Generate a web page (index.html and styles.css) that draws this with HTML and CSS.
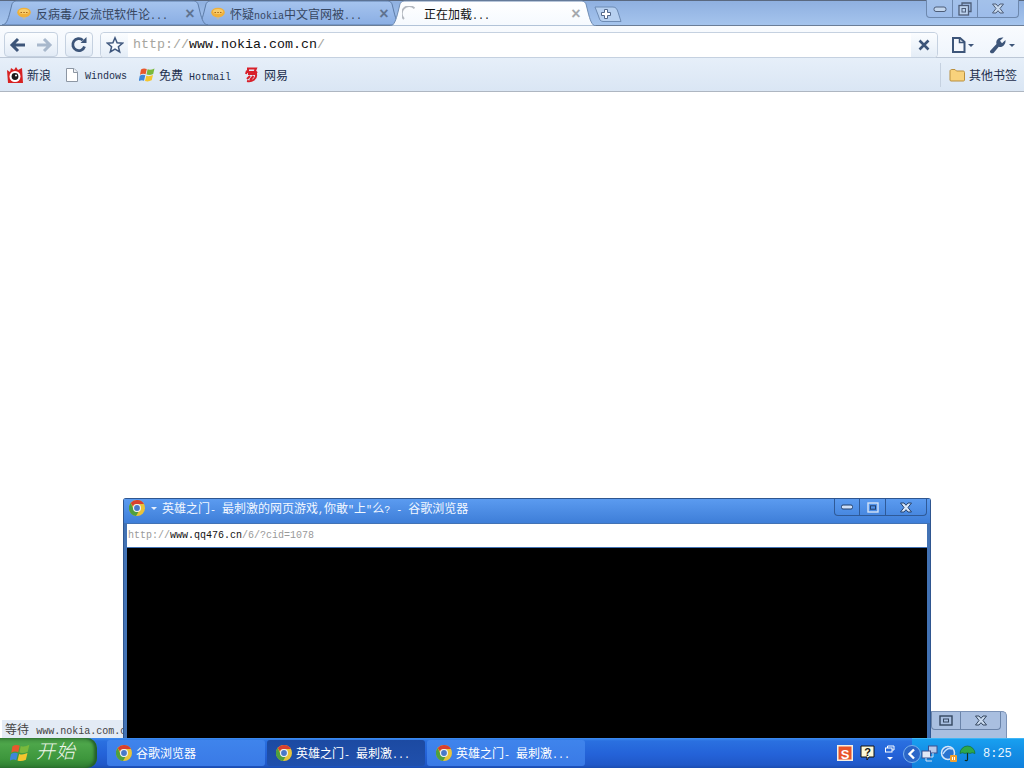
FILE: index.html
```html
<!DOCTYPE html>
<html lang="zh-CN">
<head>
<meta charset="utf-8">
<title>正在加载...</title>
<link rel="stylesheet" href="styles.css">
</head>
<body>
<svg class="defs" width="0" height="0">
  <defs>
    <linearGradient id="backfill" x1="0" y1="0" x2="0" y2="1">
      <stop offset="0" stop-color="#a6c4ee"/>
      <stop offset="1" stop-color="#8aaee4"/>
    </linearGradient>
    <linearGradient id="frontfill" x1="0" y1="0" x2="0" y2="1">
      <stop offset="0" stop-color="#ffffff"/>
      <stop offset="1" stop-color="#f5f9fe"/>
    </linearGradient>
  </defs>
  <symbol id="chrome" viewBox="0 0 16 16">
    <circle cx="8" cy="8" r="8" fill="#e8c33a"/>
    <path d="M8 0a8 8 0 0 1 7 4H8a4 4 0 0 0-4 2.4L1.700 3A8 8 0 0 1 8 0z" fill="#d8402f"/>
    <path d="M1.700 3 4.600 9.500A4 4 0 0 0 9.500 11.700L7 16A8 8 0 0 1 1.700 3z" fill="#4f9f3f"/>
    <circle cx="8" cy="8" r="4" fill="#eef2f8"/>
    <circle cx="8" cy="8" r="2.900" fill="#4a78c8"/>
  </symbol>
  <symbol id="bubble" viewBox="0 0 14 14">
    <path d="M1 5.500 7 13l6-7.500z" fill="#b9b9ae"/>
    <ellipse cx="7" cy="5.500" rx="6.800" ry="4.800" fill="#f0b03a"/>
    <ellipse cx="7" cy="4.500" rx="5" ry="2.500" fill="#f7cd6c"/>
    <path d="M3.500 5.500h1.500M6.300 5.500h1.500M9 5.500h1.500" stroke="#a5661a" stroke-width="1.200"/>
  </symbol>
  <symbol id="flag" viewBox="0 0 16 16">
    <path d="M2 2.500Q4.500.8 7.800 2L6.600 7.300Q3.800 6.200 1 7.800z" fill="#e8582c"/>
    <path d="M8.600 2.300Q11.500 3.600 15.500 1.400L14.200 6.900Q10.800 8.700 7.500 7.500z" fill="#7ab93c"/>
    <path d="M.8 8.800Q3.500 7.200 6.300 8.300L5 13.700Q2.600 12.600-.4 14.200z" fill="#3f86d8"/>
    <path d="M7.300 8.700Q10 9.900 14 8L12.700 13.300Q9 15.200 6 14z" fill="#f4c52e"/>
  </symbol>
</svg>

<main class="browser">
  <div class="tabstrip">
    <div class="tab tab-first">
      <svg class="tab-shape" viewBox="0 0 206 25" preserveAspectRatio="none"><path class="shape-back" d="M0 25C4 25 6 20 8 12L10 4C11 2 12 1 16 1L190 1C194 1 195 2 196 4L198 12C200 20 202 25 206 25Z"/></svg>
      <svg class="tab-icon" width="14" height="14"><use href="#bubble"/></svg>
      <span class="tab-title">反病毒<span class="lat">/</span>反流氓软件论<span class="lat">...</span></span>
      <span class="tab-close">×</span>
    </div>
    <div class="tab">
      <svg class="tab-shape" viewBox="0 0 206 25" preserveAspectRatio="none"><path class="shape-back" d="M0 25C4 25 6 20 8 12L10 4C11 2 12 1 16 1L190 1C194 1 195 2 196 4L198 12C200 20 202 25 206 25Z"/></svg>
      <svg class="tab-icon" width="14" height="14"><use href="#bubble"/></svg>
      <span class="tab-title">怀疑<span class="lat">nokia</span>中文官网被<span class="lat">...</span></span>
      <span class="tab-close">×</span>
    </div>
    <div class="tab tab-active">
      <svg class="tab-shape" viewBox="0 0 206 26" preserveAspectRatio="none"><path class="shape-front" d="M0 26C4 26 6 20 8 12L10 4C11 2 12 1 16 1L190 1C194 1 195 2 196 4L198 12C200 20 202 26 206 26Z"/></svg>
      <svg class="tab-icon" width="16" height="16" viewBox="0 0 16 16"><path d="M2 13A7 7 0 0 1 12.500 2.300" fill="none" stroke="#b4b9c0" stroke-width="1.800"/></svg>
      <span class="tab-title">正在加载<span class="lat">...</span></span>
      <span class="tab-close">×</span>
    </div>
    <svg class="newtab" width="30" height="18" viewBox="0 0 30 18">
      <path d="M1 1H19C22 1 23 3 24 6L27 15.500H9C6 15.500 5.500 13 4.500 10Z" fill="#b7d0f0" stroke="#6d8bb4"/>
      <path d="M11 4.500h3v3h3v3h-3v3h-3v-3H8v-3h3z" transform="translate(-.5 -1)" fill="#fff" stroke="#53688a"/>
    </svg>
    <div class="winbtns">
      <span class="winbtn winbtn-min"><svg width="14" height="8" viewBox="0 0 14 8"><rect x="1" y="2" width="12" height="4.500" rx="2" fill="#c3d6ee" stroke="#4d5d78"/></svg></span>
      <span class="winbtn winbtn-max"><svg width="14" height="14" viewBox="0 0 14 14"><path d="M4 3.500V1H13V9.500H10.500" fill="none" stroke="#4d5d78" stroke-width="1.300"/><rect x="1" y="3.500" width="9.500" height="9.500" fill="#bcd2ee" stroke="#4d5d78" stroke-width="1.300"/><rect x="4" y="6.500" width="3.500" height="3.500" fill="none" stroke="#4d5d78"/></svg></span>
      <span class="winbtn winbtn-close"><svg width="14" height="11" viewBox="0 0 14 11"><path d="M1.500 1H5L7 3.300 9 1H12.500L9 5.500 12.500 10H9L7 7.700 5 10H1.500L5 5.500Z" fill="#c9daef" stroke="#4d5d78"/></svg></span>
    </div>
  </div>

  <div class="toolbar">
    <div class="navgroup">
      <span class="navbtn"><svg width="18" height="16" viewBox="0 0 18 16"><path d="M9 2 3 8l6 6M3 8h13" fill="none" stroke="#3d5579" stroke-width="3"/></svg></span>
      <span class="navbtn"><svg width="18" height="16" viewBox="0 0 18 16"><path d="M9 2l6 6-6 6M15 8H2" fill="none" stroke="#a8b8cc" stroke-width="3"/></svg></span>
    </div>
    <div class="navgroup navgroup-reload">
      <span class="navbtn"><svg width="18" height="18" viewBox="0 0 18 18"><path d="M14.500 10.500A6 6 0 1 1 12.800 4.200" fill="none" stroke="#3d5579" stroke-width="2.800"/><path d="M10.500 7H16.500V1Z" fill="#3d5579"/></svg></span>
    </div>
    <div class="omnibox">
      <span class="omni-star"><svg width="18" height="18" viewBox="0 0 18 18"><path d="M9 1.800 11.100 6.800 16.500 7.200 12.400 10.700 13.700 16 9 13.200 4.300 16 5.600 10.700 1.500 7.200 6.900 6.800Z" fill="#f7fafe" stroke="#40587e" stroke-width="1.500"/></svg></span>
      <div class="omni-url"><span class="url-scheme">http://</span>www.nokia.com.cn<span class="url-scheme">/</span></div>
      <span class="omni-stop"><svg width="12" height="12" viewBox="0 0 12 12"><path d="M1.500 1.500l9 9M10.500 1.500l-9 9" stroke="#3d5579" stroke-width="2.600"/></svg></span>
    </div>
    <div class="toolmenu">
      <svg width="24" height="18" viewBox="0 0 24 18"><path d="M2 2H9L13.500 6V16H2Z" fill="#f5f8fd" stroke="#3d5579" stroke-width="2"/><path d="M8.500 2V6.500H13.500" fill="none" stroke="#3d5579" stroke-width="1.500"/><path d="M17 8h6l-3 3z" fill="#3d5579"/></svg>
    </div>
    <div class="toolmenu toolmenu-wrench">
      <svg width="27" height="18" viewBox="0 0 27 18"><path d="M1 15 7.500 8C6.500 4 9.500 1 14.500 1.500L11 4.800 13 7.300 16.500 4C17 9 13 11.800 9.800 10.800L4.500 17C3 18 .5 16.800 1 15Z" fill="#3d5579"/><path d="M20 8h6l-3 3z" fill="#3d5579"/></svg>
    </div>
  </div>

  <div class="bookmarks">
    <span class="bookmark"><svg width="16" height="16" viewBox="0 0 16 16"><path d="M0 3 3 5 4 1 7 3 9 0 11 3 15 1 16 16H1Z" fill="#d72222"/><circle cx="8" cy="9.500" r="5.500" fill="#fff"/><circle cx="8" cy="9.500" r="3.400" fill="#1a1a1a"/><circle cx="9" cy="8.500" r="1" fill="#fff"/></svg>新浪</span>
    <span class="bookmark bookmark-latin bm-windows"><svg width="14" height="16" viewBox="0 0 14 16"><path d="M1.500 1.500H9L12.500 5V14.500H1.500Z" fill="#fff" stroke="#8c96a3"/><path d="M8.500 1.500V5.500H12.500" fill="#eef1f5" stroke="#8c96a3"/></svg><span class="bm-lat">Windows</span></span>
    <span class="bookmark bookmark-latin bm-hotmail"><svg width="16" height="16"><use href="#flag"/></svg><span><span class="cjk-size">免费</span> Hotmail</span></span>
    <span class="bookmark bm-netease"><svg width="14" height="16" viewBox="0 0 14 16"><path d="M3 1.500H11L9.500 5H3ZM3 7H12M2 3.500 1 7M11 7C12 12 7 15 2 14M5 9 2 12M8.500 9 5 13M10 4 12 6" fill="none" stroke="#d8202a" stroke-width="2"/></svg>网易</span>
    <span class="bookmark bm-other"><svg width="16" height="14" viewBox="0 0 16 14"><path d="M1 3C1 2 2 1.500 3 1.500H6L7.500 3H14C15 3 15.500 3.500 15.500 4.500V12C15.500 12.800 15 13 14 13H2C1.300 13 1 12.500 1 12Z" fill="#f8d27c" stroke="#b98f3f"/></svg>其他书签</span>
  </div>
  <div class="page"></div>
</main>

<div class="statusbubble">等待 <span class="status-url">www.nokia.com.cn</span></div>

<section class="backwin">
  <div class="backwin-btns">
    <span class="backbtn backbtn-max"><svg width="14" height="11" viewBox="0 0 14 11"><rect x="1" y="1" width="12" height="9" fill="none" stroke="#34465f" stroke-width="1.400"/><rect x="4.500" y="4" width="5" height="3" fill="none" stroke="#34465f"/></svg></span>
    <span class="backbtn backbtn-close"><svg width="14" height="11" viewBox="0 0 14 11"><path d="M1.500 1H5L7 3.300 9 1H12.500L9 5.500 12.500 10H9L7 7.700 5 10H1.500L5 5.500Z" fill="#c9daef" stroke="#34465f"/></svg></span>
  </div>
</section>

<section class="popup">
  <header class="popup-title">
    <svg width="16" height="16"><use href="#chrome"/></svg>
    <span class="popup-caret"></span>
    <span class="popup-text">英雄之门<span class="lat">- </span>最刺激的网页游戏<span class="lat">,</span>你敢<span class="lat">"</span>上<span class="lat">"</span>么<span class="lat">? - </span>谷歌浏览器</span>
    <div class="popup-btns">
      <span class="popbtn popbtn-min"><svg width="12" height="6" viewBox="0 0 12 6"><rect x=".5" y="1" width="11" height="4" rx="1.500" fill="#cfe0f7" stroke="#23406d"/></svg></span>
      <span class="popbtn popbtn-max"><svg width="12" height="11" viewBox="0 0 12 11"><rect x="1" y="1" width="10" height="9" fill="none" stroke="#d5e3f7" stroke-width="1.400"/><rect x="3.500" y="3.800" width="5" height="3.400" fill="none" stroke="#23406d"/></svg></span>
      <span class="popbtn popbtn-close"><svg width="14" height="11" viewBox="0 0 14 11"><path d="M1.500 1H5L7 3.300 9 1H12.500L9 5.500 12.500 10H9L7 7.700 5 10H1.500L5 5.500Z" fill="#dbe8f9" stroke="#23406d"/></svg></span>
    </div>
  </header>
  <div class="popup-url"><span class="popurl-grey">http://</span>www.qq476.cn<span class="popurl-grey">/6/?cid=1078</span></div>
  <div class="popup-body"></div>
</section>

<footer class="taskbar">
  <div class="startbtn">
    <svg width="20" height="20"><use href="#flag"/></svg>
    <span class="start-text">开始</span>
  </div>
  <div class="tasks">
    <div class="task"><svg width="16" height="16"><use href="#chrome"/></svg><span>谷歌浏览器</span></div>
    <div class="task task-active"><svg width="16" height="16"><use href="#chrome"/></svg><span>英雄之门<span class="lat">- </span>最刺激<span class="lat">...</span></span></div>
    <div class="task"><svg width="16" height="16"><use href="#chrome"/></svg><span>英雄之门<span class="lat">- </span>最刺激<span class="lat">...</span></span></div>
  </div>
  <div class="quick">
    <svg class="q-s" width="16" height="16" viewBox="0 0 16 16"><rect width="16" height="16" fill="#f6efe2"/><rect x="1.500" y="1.500" width="13" height="13" fill="#e8542a"/><text x="8" y="13.500" class="s-glyph">S</text></svg>
    <svg class="q-help" width="15" height="16" viewBox="0 0 15 16"><path d="M1 1H14V12H9L7 15V12H1Z" fill="#fbf7d8" stroke="#111"/><text x="7.500" y="10.500" class="help-glyph">?</text></svg>
    <svg class="q-restore" width="10" height="16" viewBox="0 0 10 16"><path d="M2.500 3V1H9V5H7" fill="none" stroke="#fff"/><rect x=".5" y="3" width="6.500" height="4" fill="none" stroke="#fff"/><path d="M2 12h6l-3 3z" fill="#fff"/></svg>
  </div>
  <div class="tray">
    <svg class="tray-chev" width="18" height="18" viewBox="0 0 18 18"><circle cx="9" cy="9" r="8.500" fill="#2a66c8" stroke="#7ab2ec"/><path d="M11 4.500 6.500 9l4.500 4.500" fill="none" stroke="#fff" stroke-width="2.400"/></svg>
    <svg class="tray-net" width="17" height="17" viewBox="0 0 17 17"><rect x="7.500" y="1" width="8.500" height="7" fill="#b7c9ea" stroke="#3a4f8d"/><rect x="1" y="6" width="8.500" height="7" fill="#e0e8f6" stroke="#3a4f8d"/><path d="M12 8v4H9M5 13v3h6" stroke="#d8e2f4" fill="none"/></svg>
    <svg class="tray-globe" width="17" height="17" viewBox="0 0 17 17"><circle cx="8" cy="8" r="6.500" fill="#2a74d0" stroke="#d6e6f8" stroke-width="1.500"/><path d="M3 9Q7 2 12 4" stroke="#bfe0ff" fill="none" stroke-width="1.500"/><rect x="10" y="10" width="7" height="7" rx="1" fill="#f0a030"/><path d="M12.500 12v3M14.500 12v3" stroke="#fff"/></svg>
    <svg class="tray-umb" width="17" height="17" viewBox="0 0 17 17"><path d="M1 8.500A7.500 7.500 0 0 1 16 8.500Q13 7 11 8.500 8.500 7 6 8.500 3.500 7 1 8.500Z" fill="#2ea84a" stroke="#12652a" stroke-width=".6"/><path d="M8.500 8v6.500c0 1.500-2 1.500-2.500.5" fill="none" stroke="#10301c" stroke-width="1.200"/></svg>
    <span class="clock">8:25</span>
  </div>
</footer>
</body>
</html>
```
FILE: styles.css
```css
* { box-sizing: border-box; }
html, body { margin: 0; padding: 0; }
body {
  position: relative;
  width: 1024px;
  height: 768px;
  overflow: hidden;
  background: #fff;
  font-family: "Liberation Mono", "Noto Sans CJK SC", monospace;
  font-size: 12px;
  color: #222;
}
svg { display: block; flex: none; }
.defs { position: absolute; }
.lat { font-family: "Liberation Mono", monospace; font-size: 10px; }

.browser { display: flex; flex-direction: column; height: 738px; }

.tabstrip {
  display: flex;
  align-items: flex-start;
  height: 26px;
  padding-left: 2px;
  background: linear-gradient(#8fb0e0, #a5c4ed);
  border-top: 1px solid #5a6980;
  border-bottom: 1px solid #6a7d97;
  flex: none;
}
.tab {
  position: relative;
  display: flex;
  align-items: center;
  width: 206px;
  height: 25px;
  margin-top: -1px;
  margin-right: -12px;
  padding: 2px 12px 0 15px;
  color: #364660;
  flex: none;
}
.tab-first { z-index: 1; }
.tab-active { height: 26px; color: #111; z-index: 2; padding: 2px 14px 0 12px; }
.tab-shape { position: absolute; inset: 0; width: 100%; height: 100%; }
.shape-back { fill: url(#backfill); stroke: #5d7ca8; stroke-width: 1; vector-effect: non-scaling-stroke; }
.shape-front { fill: url(#frontfill); stroke: #6f8cb3; stroke-width: 1; vector-effect: non-scaling-stroke; }
.tab-icon { position: relative; }
.tab-title {
  position: relative;
  flex: 1;
  margin-left: 5px;
  font-size: 12px;
  white-space: nowrap;
  overflow: hidden;
}
.tab-close {
  position: relative;
  width: 12px;
  font: bold 16px/16px "Liberation Sans", sans-serif;
  color: #5f7390;
  text-align: center;
}
.tab-active .tab-close { color: #a4a8ad; }
.tab-active .tab-title { margin-left: 6px; }

.newtab { margin: 5px 0 0 10px; position: relative; z-index: 0; }

.winbtns {
  display: flex;
  margin: -1px 5px 0 auto;
  height: 18px;
  border: 1px solid #6d88ae;
  border-top: 0;
  border-radius: 0 0 4px 4px;
  background: linear-gradient(#a3c1ea, #9dbcea);
}
.winbtn { display: flex; align-items: center; justify-content: center; height: 100%; border-left: 1px solid #6d88ae; }
.winbtn-min { width: 25px; border-left: 0; }
.winbtn-max { width: 25px; }
.winbtn-close { width: 41px; }

.toolbar {
  display: flex;
  align-items: flex-end;
  height: 32px;
  padding-left: 4px;
  background: linear-gradient(#f9fbfe, #eff5fc);
  border-bottom: 1px solid #bcc7d6;
  flex: none;
}
.navgroup {
  display: flex;
  height: 25px;
  border: 1px solid #c5d1e0;
  border-radius: 4px;
  background: linear-gradient(#fbfdff, #e2ebf6);
}
.navgroup-reload { margin-left: 7px; }
.navbtn { display: flex; align-items: center; justify-content: center; width: 26px; }
.omnibox {
  display: flex;
  align-items: stretch;
  width: 838px;
  height: 26px;
  margin-left: 7px;
  margin-bottom: -1px;
  border: 1px solid #c5d1e0;
  border-radius: 4px;
  background: #fff;
}
.omni-star {
  display: flex;
  align-items: center;
  justify-content: center;
  width: 27px;
  background: linear-gradient(#fbfdff, #e4edf7);
  border-radius: 4px 0 0 4px;
}
.omni-url {
  flex: 1;
  padding-left: 5px;
  font-size: 13.33px;
  line-height: 24px;
  color: #111;
  white-space: nowrap;
}
.url-scheme { color: #a6a6a0; }
.omni-stop {
  display: flex;
  align-items: center;
  justify-content: center;
  width: 26px;
  background: linear-gradient(#fbfdff, #e4edf7);
  border-radius: 0 4px 4px 0;
}
.toolmenu { margin: 0 0 3px 13px; }
.toolmenu-wrench { margin-left: 14px; }

.bookmarks {
  display: flex;
  align-items: center;
  height: 34px;
  padding: 1px 0 0 7px;
  background: linear-gradient(#e6eff9, #dae6f4);
  border-bottom: 1px solid #aeb6c1;
  color: #1d2f4d;
  flex: none;
}
.bookmark { display: flex; align-items: center; gap: 4px; font-size: 12px; white-space: nowrap; }
.bookmark-latin { font-size: 10px; }
.bm-lat { padding-top: 3px; }
.cjk-size { font-size: 12px; }
.bm-windows { margin-left: 14px; gap: 6px; }
.bm-hotmail { margin-left: 12px; }
.bm-netease { margin-left: 14px; gap: 5px; }
.bm-other {
  margin-left: auto;
  height: 24px;
  padding: 0 7px 0 8px;
  border-left: 1px solid #c5d1e0;
}
.page { flex: 1; background: #fff; }

.statusbubble {
  position: absolute;
  left: 2px;
  top: 720px;
  width: 130px;
  height: 18px;
  padding: 2px 0 0 3px;
  background: #e3ebf5;
  border-radius: 0 3px 0 0;
  color: #444;
  line-height: 19px;
  white-space: nowrap;
}
.status-url { font-size: 10px; }

.backwin {
  position: absolute;
  left: 920px;
  top: 711px;
  width: 87px;
  height: 27px;
  background: #a9bfe0;
  border: 1px solid #7b92b6;
  border-bottom: 0;
  border-radius: 0 5px 0 0;
  padding-right: 5px;
  display: flex;
  flex-direction: column;
  align-items: flex-end;
}
.backwin-btns {
  display: flex;
  height: 18px;
  border: 1px solid #6b84a9;
  border-top: 0;
  border-radius: 0 0 4px 4px;
}
.backbtn { display: flex; align-items: center; justify-content: center; height: 100%; }
.backbtn-max { width: 28px; }
.backbtn-close { width: 40px; border-left: 1px solid #6b84a9; }

.popup {
  position: absolute;
  left: 123px;
  top: 498px;
  width: 808px;
  height: 240px;
  display: flex;
  flex-direction: column;
  background: #4272b4;
  border: 1px solid #2f5690;
  border-bottom: 0;
  border-radius: 3px 3px 0 0;
  padding: 0 3px;
}
.popup-title {
  position: relative;
  display: flex;
  align-items: center;
  height: 24px;
  margin: 0 -3px;
  padding: 0 0 6px 5px;
  background: linear-gradient(#5b9bf0, #3e7ed8);
  color: #f2f7ff;
  flex: none;
}
.popup-caret {
  margin-left: 6px;
  border: 3px solid transparent;
  border-top: 3px solid #e6effc;
  border-bottom: 0;
}
.popup-text { margin-left: 5px; font-size: 12px; white-space: nowrap; }
.popup-btns {
  position: absolute;
  right: 3px;
  top: 0;
  display: flex;
  height: 17px;
  border: 1px solid #2f5a98;
  border-top: 0;
  border-radius: 0 0 4px 4px;
}
.popbtn { display: flex; align-items: center; justify-content: center; height: 100%; }
.popbtn-min { width: 24px; }
.popbtn-max { width: 26px; border-left: 1px solid #2f5a98; }
.popbtn-close { width: 41px; border-left: 1px solid #2f5a98; }
.popup-url {
  height: 23px;
  margin-top: 1px;
  padding-left: 1px;
  background: #fff;
  font-size: 10px;
  line-height: 23px;
  color: #111;
  flex: none;
}
.popurl-grey { color: #999; }
.popup-body { flex: 1; margin-top: 1px; background: #000; }

.taskbar {
  position: absolute;
  left: 0;
  top: 738px;
  width: 1024px;
  height: 30px;
  display: flex;
  align-items: stretch;
  background: linear-gradient(#3c8cf0 0, #2a70e0 10%, #2462d8 55%, #2058c8 90%, #1a4cb0 100%);
  color: #fff;
  font-size: 12px;
}
.startbtn {
  display: flex;
  align-items: center;
  width: 97px;
  padding-left: 10px;
  background: linear-gradient(#3e8e3e 0, #4da64a 20%, #3d963c 70%, #2d7a30 100%);
  border-radius: 0 10px 10px 0;
  box-shadow: inset -3px 0 3px #245f2a;
  flex: none;
}
.start-text {
  margin-left: 6px;
  font-size: 19px;
  font-style: italic;
  font-weight: 300;
  letter-spacing: 1px;
  line-height: 26px;
  color: #f2f7ee;
}
.tasks { display: flex; gap: 2px; margin-left: 10px; padding: 2px 0 2px; }
.task {
  display: flex;
  align-items: center;
  gap: 4px;
  width: 158px;
  padding-left: 9px;
  background: linear-gradient(#3f84ec, #3a7ae6);
  border-radius: 3px;
  white-space: nowrap;
}
.task-active { background: linear-gradient(#1c4aa2, #2050ac); }
.quick { display: flex; align-items: center; margin-left: auto; flex: none; }
.q-s { margin-right: 7px; }
.q-help { margin-right: 10px; }
.s-glyph { font: bold 13px "Liberation Sans", sans-serif; fill: #fff; text-anchor: middle; }
.help-glyph { font: bold 11px "Liberation Sans", sans-serif; fill: #111; text-anchor: middle; }
.tray {
  display: flex;
  align-items: center;
  width: 112px;
  margin-left: 17px;
  background: linear-gradient(#18a0f0 0, #1490e6 40%, #1080dc 100%);
  border-top: 1px solid #3fb5f5;
  flex: none;
}
.tray-chev { margin-left: -9px; }
.tray-globe { margin-left: 2px; }
.tray-umb { margin-left: 2px; }
.clock { margin-left: 7px; letter-spacing: 0; color: #eaf6ff; }
```
